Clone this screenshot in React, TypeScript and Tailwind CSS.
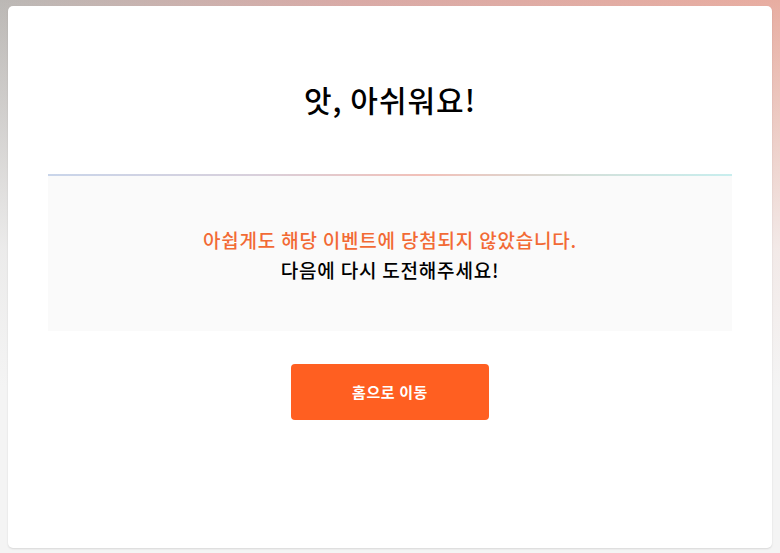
export default function App() {
  return (
    <div className="min-h-[553px] bg-[linear-gradient(to_bottom,rgba(244,244,244,0)_0%,rgba(244,244,244,0.85)_45%,#f4f4f4_70%),linear-gradient(to_right,#bbb8b5_0%,#d9aaa6_45%,#e8ada1_100%)] px-2 pt-1.5 pb-[5px] font-['Noto_Sans_CJK_KR','Noto_Sans',sans-serif]">
      <div className="flex h-[542px] flex-col items-center rounded-[5px] bg-white px-10 pt-[75px] shadow-[0_1px_2px_rgba(0,0,0,0.12)]">
        <h1 className="text-[30px] leading-[36px] font-medium tracking-[1px] text-black">앗, 아쉬워요!</h1>

        <div className="mt-[57px] h-[2px] w-full bg-[linear-gradient(to_right,#c9d5ea_0%,#d8d0dc_30%,#f2c0b8_55%,#d3e0da_78%,#c8eeee_100%)]" />
        <div className="flex h-[155px] w-full flex-col items-center justify-center bg-[#fafafa] pt-[3px]">
          <p className="text-[19px] leading-[30px] font-medium tracking-[0.8px] text-[#f26a35]">아쉽게도 해당 이벤트에 당첨되지 않았습니다.</p>
          <p className="text-[19px] leading-[30px] font-medium tracking-[0.8px] text-black">다음에 다시 도전해주세요!</p>
        </div>

        <button
          type="button"
          className="mt-[33px] h-[56px] w-[198px] rounded-[4px] bg-[#ff5f21] text-[15px] font-bold tracking-[0.6px] text-white"
        >
          홈으로 이동
        </button>
      </div>
    </div>
  );
}
